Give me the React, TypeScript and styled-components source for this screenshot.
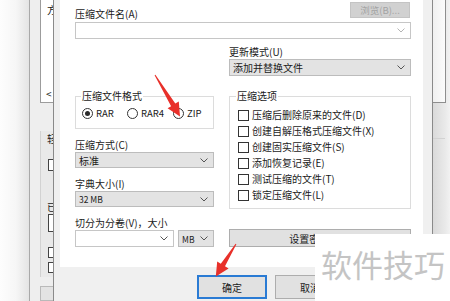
import React from 'react';
import styled, { createGlobalStyle } from 'styled-components';

const FONT = `"Noto Sans CJK SC", "Noto Sans", sans-serif`;

const GlobalStyle = createGlobalStyle`
  html, body { margin: 0; padding: 0; background: #f0f0f0; }
  body { width: 450px; height: 301px; overflow: hidden; }
`;

const Screen = styled.div`
  position: relative;
  display: flex;
  width: 450px;
  height: 301px;
  overflow: hidden;
  font-family: ${FONT};
  font-size: 10px;
  color: #1b1b1b;
`;

/* ---- window behind the dialog ---- */
const BackLeft = styled.div`
  display: flex;
  width: 53px;
  flex: none;
`;
const Shade = styled.div`
  width: 29px;
  background: linear-gradient(to right, #fdfdfd 0%, #f6f6f6 55%, #e4e4e4 100%);
  border-right: 1px solid #a9a9a9;
`;
const BackColumn = styled.div`
  flex: 1;
  display: flex;
  flex-direction: column;
  padding-left: 10px;
  background: #eeeeee;
  overflow: hidden;
`;
const ListPane = styled.div`
  height: 102px;
  display: flex;
  flex-direction: column;
  justify-content: space-between;
  background: #fff;
  border-left: 1px solid #9c9c9c;
  border-bottom: 1px solid #9c9c9c;
  overflow: hidden;
`;
const Glyph = styled.span<{ $top?: number; $left?: number }>`
  display: block;
  margin: ${(p) => p.$top ?? 0}px 0 0 ${(p) => p.$left ?? 6}px;
  line-height: 12px;
  white-space: nowrap;
`;
const SidePane = styled.div`
  margin-top: 28px;
  height: 146px;
  display: flex;
  flex-direction: column;
  background: #e9e9e9;
  border-left: 1px solid #d2d2d2;
  overflow: hidden;
`;
const Stub = styled.span<{ $top: number; $h: number }>`
  display: block;
  width: 10px;
  height: ${(p) => p.$h}px;
  margin: ${(p) => p.$top}px 0 0 7px;
  border: 1px solid #444;
  background: #fff;
`;
const StubButton = styled.div`
  margin-top: 9px;
  flex: 1;
  border: 1px solid #b9b9b9;
  border-right: none;
  background: #e3e3e3;
`;

const BackRight = styled.div`
  width: 17px;
  flex: none;
  display: flex;
  flex-direction: column;
  background: linear-gradient(to right, #dadada, #e9e9e9 70%, #f2f2f2);
`;
const RightPane = styled.div`
  width: 12px;
  height: 102px;
  background: linear-gradient(to right, #f0f0f0, #fbfbfb);
  border-right: 1px solid #8e8e8e;
  border-bottom: 1px solid #8e8e8e;
`;
const RightRule = styled.div`
  width: 12px;
  height: 1px;
  margin-top: 35px;
  background: #d2d2d2;
`;

/* ---- the dialog ---- */
const Dialog = styled.div`
  width: 378px;
  flex: none;
  display: flex;
  flex-direction: column;
  background: #f0f0f0;
  border-left: 1px solid #8a8a8a;
  border-right: 1px solid #8a8a8a;
`;
const Panel = styled.div`
  height: 267px;
  margin: 0 9px 0 6px;
  padding: 0 12px 0 15px;
  background: #ffffff;
  display: flex;
  flex-direction: column;
`;
const TopRow = styled.div`
  height: 22px;
  display: flex;
  justify-content: space-between;
  align-items: flex-start;
`;
const Label = styled.div<{ $top?: number }>`
  margin-top: ${(p) => p.$top ?? 0}px;
  margin-bottom: 1px;
  line-height: 12px;
  white-space: nowrap;
`;
const BrowseButton = styled.div`
  margin: 2px 1px 0 0;
  width: 60px;
  height: 16px;
  box-sizing: border-box;
  display: flex;
  align-items: center;
  justify-content: center;
  background: #d1d1d1;
  border: 1px solid #c4c4c4;
  color: #a3a3a3;
  font-size: 9.5px;
`;
const Combo = styled.div<{ $h?: number; $w?: number }>`
  height: ${(p) => p.$h ?? 17}px;
  width: ${(p) => (p.$w ? `${p.$w}px` : 'auto')};
  box-sizing: border-box;
  display: flex;
  align-items: center;
  justify-content: flex-end;
  padding-right: 5px;
  background: #fff;
  border: 1px solid #c6c6c6;
`;
const Select = styled.div<{ $h?: number; $w?: number; $small?: boolean }>`
  height: ${(p) => p.$h ?? 16}px;
  width: ${(p) => (p.$w ? `${p.$w}px` : 'auto')};
  box-sizing: border-box;
  display: flex;
  align-items: center;
  justify-content: space-between;
  padding: 0 5px 0 3px;
  background: #e3e3e3;
  border: 1px solid #bcbcbc;
  font-size: ${(p) => (p.$small ? 8.5 : 10)}px;
  white-space: nowrap;
`;
const Columns = styled.div`
  display: grid;
  grid-template-columns: 139px 182px;
  column-gap: 15px;
  row-gap: 14px;
  padding-top: 7px;
`;
const Stack = styled.div`
  display: flex;
  flex-direction: column;
`;
const Group = styled.fieldset<{ $pad: number; $bottom: number }>`
  margin: 0;
  min-width: 0;
  padding: 0 ${(p) => p.$pad}px ${(p) => p.$bottom}px;
  border: 1px solid #dcdcdc;
`;
const Legend = styled.legend`
  padding: 0 1px;
  line-height: 12px;
  font-size: 10px;
`;
const RadioRow = styled.div`
  display: grid;
  grid-template-columns: 45px 46px auto;
  margin: 5px 0 0 1px;
  height: 12px;
`;
const Option = styled.label`
  display: flex;
  align-items: center;
  gap: 3px;
  font-size: 9.5px;
  line-height: 12px;
  white-space: nowrap;
`;
const Radio = styled.span<{ $on?: boolean }>`
  width: 11px;
  height: 11px;
  box-sizing: border-box;
  border: 1px solid #333;
  border-radius: 50%;
  display: flex;
  align-items: center;
  justify-content: center;
  &::after {
    content: '';
    width: 5px;
    height: 5px;
    border-radius: 50%;
    background: ${(p) => (p.$on ? '#2b2b2b' : 'transparent')};
  }
`;
const CheckList = styled.div`
  display: flex;
  flex-direction: column;
  margin: 5px 0 0 2px;
`;
const CheckRow = styled.label`
  height: 16px;
  display: flex;
  align-items: center;
  gap: 3px;
  white-space: nowrap;
  line-height: 12px;
`;
const Box = styled.span`
  width: 11px;
  height: 11px;
  box-sizing: border-box;
  border: 1px solid #333;
  background: #fff;
`;
const Field = styled.div`
  margin-top: 10px;
  display: flex;
  flex-direction: column;
`;
const SplitRow = styled.div`
  display: flex;
  gap: 4px;
`;
const WideButton = styled.div`
  margin-top: auto;
  height: 18px;
  box-sizing: border-box;
  display: flex;
  align-items: center;
  justify-content: center;
  background: #e1e1e1;
  border: 1px solid #adadad;
`;
const Footer = styled.div`
  flex: 1;
  display: flex;
  gap: 8px;
  padding: 8px 0 0 143px;
`;
const DlgButton = styled.div<{ $default?: boolean }>`
  width: 70px;
  height: 24px;
  box-sizing: border-box;
  display: flex;
  align-items: center;
  justify-content: center;
  background: #e1e1e1;
  border: ${(p) => (p.$default ? '2px solid #2a7bd4' : '1px solid #adadad')};
`;

/* ---- overlays ---- */
const Watermark = styled.div`
  position: absolute;
  right: 0;
  bottom: 0;
  width: 135px;
  height: 67px;
  box-sizing: border-box;
  padding: 14px 0 0 6px;
  background: #fff;
  color: #c4c4c4;
  font-size: 31px;
  line-height: 31px;
  white-space: nowrap;
`;
const ArrowLayer = styled.svg`
  position: absolute;
  left: 0;
  top: 0;
  pointer-events: none;
`;

const Chevron = ({ tone }: { tone: string }) => (
  <svg width="8" height="5" viewBox="0 0 8 5">
    <polyline points="0.5,0.5 4,4 7.5,0.5" fill="none" stroke={tone} strokeWidth="1" />
  </svg>
);

const options = [
  '压缩后删除原来的文件(D)',
  '创建自解压格式压缩文件(X)',
  '创建固实压缩文件(S)',
  '添加恢复记录(E)',
  '测试压缩的文件(T)',
  '锁定压缩文件(L)',
];

export default function App() {
  return (
    <Screen>
      <GlobalStyle />
      <BackLeft>
        <Shade />
        <BackColumn>
          <ListPane>
            <Glyph $top={4}>方</Glyph>
            <Glyph $left={5} style={{ marginBottom: 2 }}>&lt;</Glyph>
          </ListPane>
          <SidePane>
            <Glyph $top={2}>轻</Glyph>
            <Stub $top={14} $h={10} />
            <Glyph $top={30}>已</Glyph>
            <Stub $top={1} $h={16} />
            <Stub $top={15} $h={9} />
            <Stub $top={4} $h={9} />
          </SidePane>
          <StubButton />
        </BackColumn>
      </BackLeft>

      <Dialog>
        <Panel>
          <TopRow>
            <Label $top={8}>压缩文件名(A)</Label>
            <BrowseButton>浏览(B)...</BrowseButton>
          </TopRow>
          <Combo>
            <Chevron tone="#b4b4b4" />
          </Combo>

          <Columns>
            <div />
            <Stack>
              <Label>更新模式(U)</Label>
              <Select $h={17}>
                添加并替换文件
                <Chevron tone="#555" />
              </Select>
            </Stack>

            <Stack>
              <Group $pad={5} $bottom={9}>
                <Legend>压缩文件格式</Legend>
                <RadioRow>
                  <Option><Radio $on />RAR</Option>
                  <Option><Radio />RAR4</Option>
                  <Option><Radio />ZIP</Option>
                </RadioRow>
              </Group>
              <Field>
                <Label>压缩方式(C)</Label>
                <Select>
                  标准
                  <Chevron tone="#555" />
                </Select>
              </Field>
              <Field>
                <Label>字典大小(I)</Label>
                <Select $small>
                  32 MB
                  <Chevron tone="#555" />
                </Select>
              </Field>
              <Field>
                <Label>切分为分卷(V)，大小</Label>
                <SplitRow>
                  <Combo $w={99}>
                    <Chevron tone="#555" />
                  </Combo>
                  <Select $h={17} $w={36} $small>
                    MB
                    <Chevron tone="#555" />
                  </Select>
                </SplitRow>
              </Field>
            </Stack>

            <Stack>
              <Group $pad={6} $bottom={5}>
                <Legend>压缩选项</Legend>
                <CheckList>
                  {options.map((o) => (
                    <CheckRow key={o}>
                      <Box />
                      {o}
                    </CheckRow>
                  ))}
                </CheckList>
              </Group>
              <WideButton>设置密码(P)...</WideButton>
            </Stack>
          </Columns>
        </Panel>
        <Footer>
          <DlgButton $default>确定</DlgButton>
          <DlgButton>取消</DlgButton>
        </Footer>
      </Dialog>

      <BackRight>
        <RightPane />
        <RightRule />
      </BackRight>

      <Watermark>软件技巧</Watermark>

      <ArrowLayer width="450" height="301" viewBox="0 0 450 301">
        <polygon
          fill="#e8302a"
          points="154.6,75.3 171.1,106.2 167.6,108.3 180,116.5 178.8,101.5 175.3,103.6 155.4,74.7"
        />
        <polygon
          fill="#e8302a"
          points="235.6,243.7 220.8,263.7 217.2,261.4 215.8,276.5 228.6,268.6 225.0,266.3 236.4,244.3"
        />
      </ArrowLayer>
    </Screen>
  );
}
